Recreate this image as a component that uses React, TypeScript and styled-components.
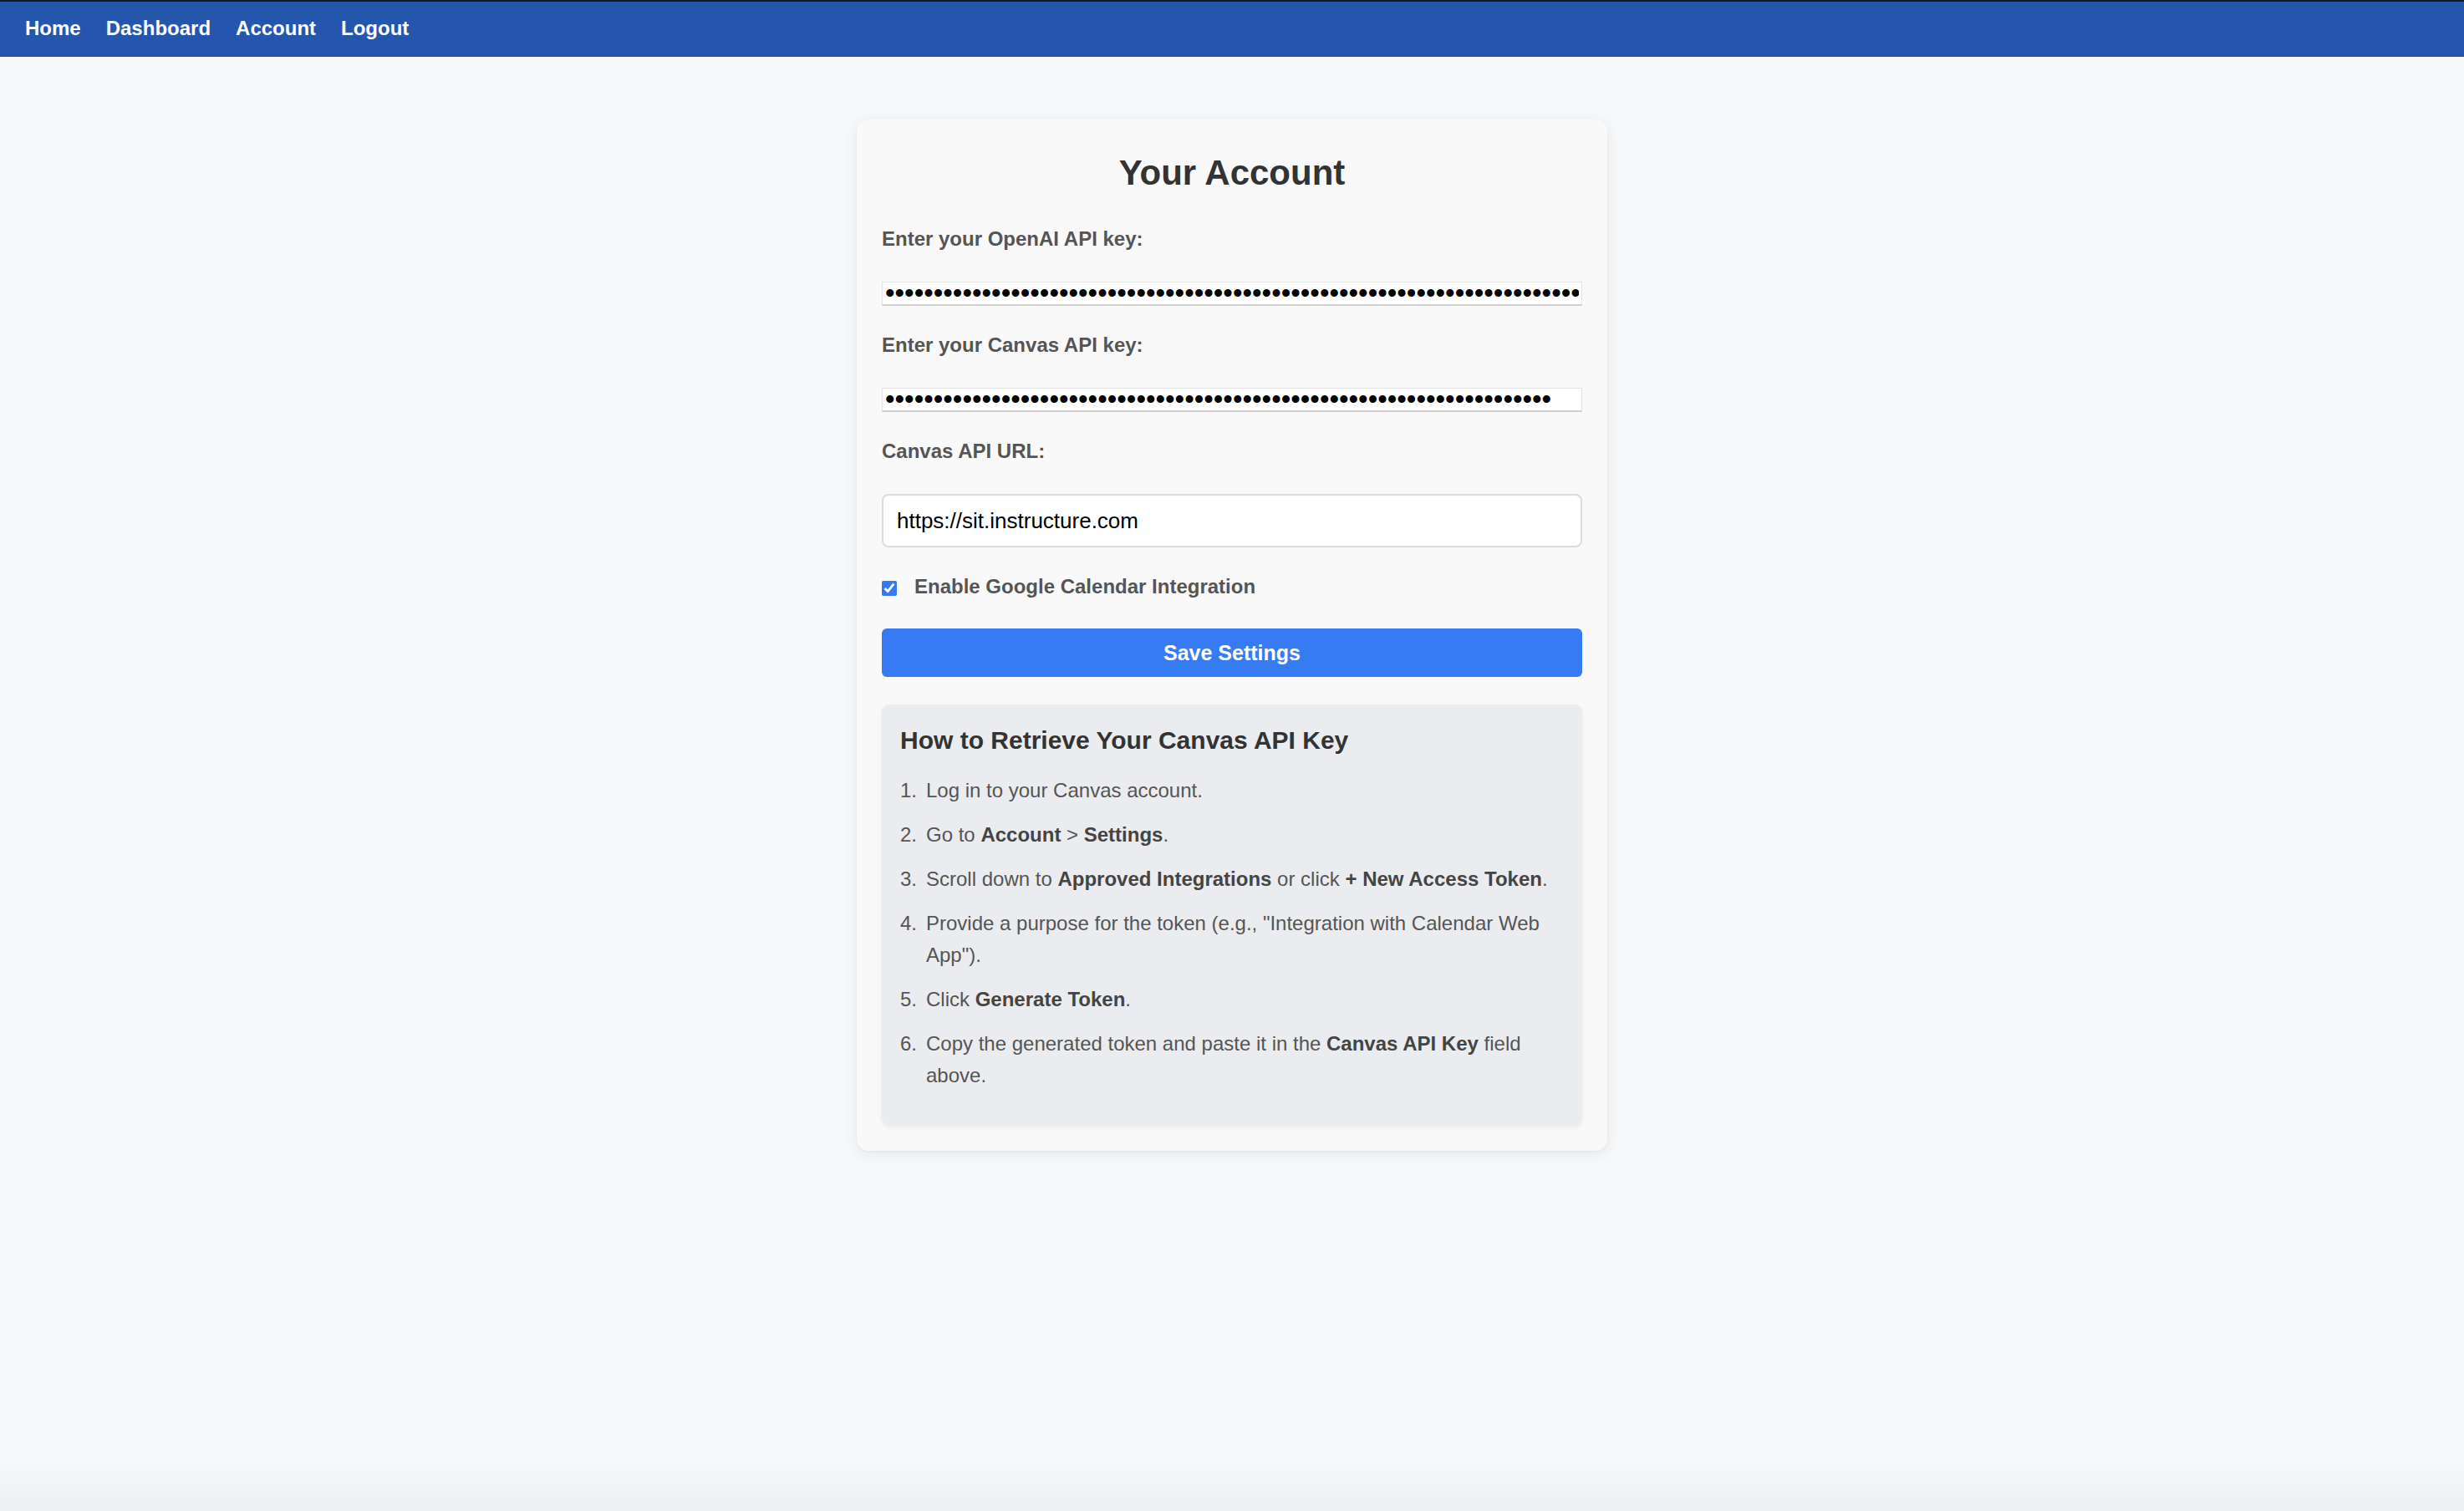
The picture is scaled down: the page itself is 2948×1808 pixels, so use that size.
import React from 'react';
import styled, { createGlobalStyle } from 'styled-components';

const GlobalStyle = createGlobalStyle`
    html, body {
        margin: 0;
        padding: 0;
    }
    body {
        min-height: 100vh;
        background: linear-gradient(to bottom, #f7f8fa calc(100% - 60px), #eeeff1 100%);
        font-family: "Liberation Sans", Arial, Helvetica, sans-serif;
    }
`;

const Page = styled.div`
    min-height: 100vh;
    display: flex;
    flex-direction: column;
`;

const NavBar = styled.nav`
    height: 68px;
    box-sizing: border-box;
    border-top: 2px solid #151a22;
    background: #2456ae;
    display: flex;
    align-items: center;
    gap: 30px;
    padding: 0 30px 2px;
`;

const NavLink = styled.a`
    color: #ffffff;
    font-size: 24px;
    font-weight: 700;
    text-decoration: none;
    cursor: pointer;
`;

const Main = styled.main`
    display: flex;
    justify-content: center;
    padding-top: 75px;
`;

const Card = styled.div`
    width: 898px;
    box-sizing: border-box;
    padding: 30px 30px 30px;
    background: #f9f9f9;
    border-radius: 14px;
    box-shadow: 0 4px 18px rgba(0, 0, 0, 0.07), 0 1px 3px rgba(0, 0, 0, 0.04);
`;

const Form = styled.form`
    display: flex;
    flex-direction: column;
    gap: 33px;
`;

const Title = styled.h2`
    margin: 9px 0 7px;
    text-align: center;
    font-size: 42px;
    line-height: 50px;
    font-weight: 700;
    color: #333333;
`;

const Field = styled.div`
    display: flex;
    flex-direction: column;
    gap: 37px;
`;

const Label = styled.label`
    font-size: 24px;
    line-height: 28px;
    font-weight: 700;
    color: #555555;
`;

const SecretInput = styled.input`
    height: 29px;
    box-sizing: border-box;
    width: 100%;
    padding: 0 3px;
    margin: 0;
    background: #ffffff;
    border: 1px solid #e4e4e4;
    border-bottom: 2px solid #cfcfcf;
    font-family: "Liberation Sans", Arial, sans-serif;
    font-size: 33px;
    color: #000000;
    outline: none;
`;

const TextInput = styled.input`
    height: 64px;
    box-sizing: border-box;
    width: 100%;
    padding: 0 16px;
    margin: 0;
    background: #ffffff;
    border: 2px solid #dcdcdc;
    border-radius: 8px;
    font-family: "Liberation Sans", Arial, sans-serif;
    font-size: 26px;
    color: #000000;
    outline: none;
`;

const CheckRow = styled.div`
    display: flex;
    align-items: center;
    gap: 21px;
    height: 28px;
`;

const CheckLabel = styled.label`
    font-size: 24px;
    line-height: 28px;
    font-weight: 700;
    color: #555555;
`;

const CheckBox = styled.input`
    width: 18px;
    height: 18px;
    margin: 4px 0 0;
    accent-color: #3478f6;
`;

const SaveButton = styled.button`
    margin-top: 3px;
    height: 58px;
    border: none;
    border-radius: 6px;
    background: #377bf2;
    color: #ffffff;
    font-family: "Liberation Sans", Arial, sans-serif;
    font-size: 25px;
    font-weight: 700;
    cursor: pointer;
`;

const HelpBox = styled.section`
    padding: 25px 22px 26px;
    background: #ebecef;
    border-radius: 9px;
    box-shadow: 0 2px 5px rgba(0, 0, 0, 0.06);
`;

const HelpTitle = styled.h3`
    margin: 0 0 23px;
    font-size: 30px;
    line-height: 36px;
    font-weight: 700;
    color: #333333;
`;

const Steps = styled.ol`
    margin: 0;
    padding: 0;
    list-style: none;
`;

const Step = styled.li`
    display: grid;
    grid-template-columns: 31px 1fr;
    margin-bottom: 14.5px;
    font-size: 24px;
    line-height: 38.4px;
    color: #555555;

    strong {
        color: #444444;
    }
`;

const StepNumber = styled.span`
    color: #555555;
`;

const OPENAI_KEY = 'x'.repeat(120);
const CANVAS_KEY = 'x'.repeat(69);

const steps: React.ReactNode[] = [
    <>Log in to your Canvas account.</>,
    <>Go to <strong>Account</strong> &gt; <strong>Settings</strong>.</>,
    <>Scroll down to <strong>Approved Integrations</strong> or click <strong>+ New Access Token</strong>.</>,
    <>Provide a purpose for the token (e.g., "Integration with Calendar Web App").</>,
    <>Click <strong>Generate Token</strong>.</>,
    <>Copy the generated token and paste it in the <strong>Canvas API Key</strong> field above.</>,
];

export default function App() {
    return (
        <Page>
            <GlobalStyle />
            <NavBar>
                {['Home', 'Dashboard', 'Account', 'Logout'].map((item) => (
                    <NavLink key={item}>{item}</NavLink>
                ))}
            </NavBar>
            <Main>
                <Card>
                    <Form onSubmit={(e) => e.preventDefault()}>
                        <Title>Your Account</Title>
                        <Field>
                            <Label htmlFor='openai'>Enter your OpenAI API key:</Label>
                            <SecretInput id='openai' type='password' defaultValue={OPENAI_KEY} />
                        </Field>
                        <Field>
                            <Label htmlFor='canvas'>Enter your Canvas API key:</Label>
                            <SecretInput id='canvas' type='password' defaultValue={CANVAS_KEY} />
                        </Field>
                        <Field>
                            <Label htmlFor='url'>Canvas API URL:</Label>
                            <TextInput id='url' type='text' defaultValue='https://sit.instructure.com' />
                        </Field>
                        <CheckRow>
                            <CheckBox id='gcal' type='checkbox' defaultChecked />
                            <CheckLabel htmlFor='gcal'>Enable Google Calendar Integration</CheckLabel>
                        </CheckRow>
                        <SaveButton type='submit'>Save Settings</SaveButton>
                        <HelpBox>
                            <HelpTitle>How to Retrieve Your Canvas API Key</HelpTitle>
                            <Steps>
                                {steps.map((s, i) => (
                                    <Step key={i}>
                                        <StepNumber>{i + 1}.</StepNumber>
                                        <span>{s}</span>
                                    </Step>
                                ))}
                            </Steps>
                        </HelpBox>
                    </Form>
                </Card>
            </Main>
        </Page>
    );
}
